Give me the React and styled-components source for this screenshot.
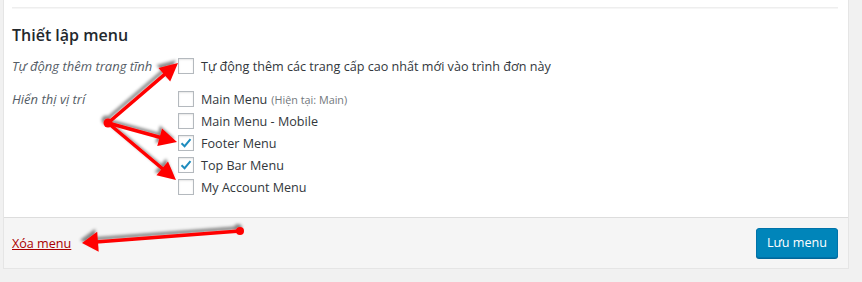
import React from "react";
import styled, { createGlobalStyle } from "styled-components";

const Global = createGlobalStyle`
  html, body { margin: 0; padding: 0; background: #f1f1f1; }
  body { font-family: "Open Sans", "Noto Sans", sans-serif; color: #32373c; font-size: 13px; }
`;

const Page = styled.div`
  position: relative;
  width: 862px;
  height: 282px;
  overflow: hidden;
`;

const Panel = styled.div`
  margin-left: 3px;
  width: 846px;
  box-sizing: border-box;
  background: #fff;
  border: 1px solid #e5e5e5;
  border-top: none;
`;

const Body = styled.div`
  padding: 7px 10px 22px 8px;
`;

const Divider = styled.div`
  border-top: 1px solid #eee;
  box-shadow: 0 1px 0 #f6f6f6;
`;

const Heading = styled.h3`
  margin: 17px 0 13px;
  font-size: 16px;
  font-weight: 600;
  color: #23282d;
  line-height: 20px;
`;

const Row = styled.div`
  display: grid;
  grid-template-columns: 166px 1fr;
  margin-top: ${(p) => p.$gap || 0}px;
`;

const Label = styled.div`
  font-style: italic;
  color: #555d66;
  font-size: 13px;
  line-height: 16px;
`;

const List = styled.div`
  display: flex;
  flex-direction: column;
  gap: 6px;
`;

const Option = styled.label`
  display: flex;
  align-items: center;
  gap: 7px;
  height: 16px;
  font-size: 12.6px;
  color: #32373c;
  white-space: nowrap;
`;

const Box = styled.span`
  width: 16px;
  height: 16px;
  box-sizing: border-box;
  border: 1px solid #b4b9be;
  background: #fff;
  box-shadow: inset 0 1px 2px rgba(0, 0, 0, 0.1);
  display: flex;
  align-items: center;
  justify-content: center;
  flex: none;
`;

const Small = styled.span`
  font-size: 10.8px;
  color: #72777c;
  margin-left: 4px;
`;

const Footer = styled.div`
  display: flex;
  align-items: center;
  justify-content: space-between;
  background: #f5f5f5;
  border-top: 1px solid #dddddd;
  padding: 10px 10px 10px 8px;
`;

const DeleteLink = styled.a`
  color: #a00;
  text-decoration: underline;
  font-size: 12.6px;
  cursor: pointer;
`;

const SaveButton = styled.button`
  height: 30px;
  padding: 0 10px;
  background: #0085ba;
  border: 1px solid #0073aa;
  border-radius: 3px;
  box-shadow: 0 1px 0 #006799;
  color: #fff;
  font-family: inherit;
  font-size: 12.6px;
  line-height: 28px;
`;

const Overlay = styled.svg`
  position: absolute;
  left: 0;
  top: 0;
  pointer-events: none;
`;

const Check = () => (
  <svg width="14" height="14" viewBox="0 0 14 14">
    <path d="M2.5 7.2 L5.6 10.2 L11.5 3.2" fill="none" stroke="#1e8cbe" strokeWidth="2" />
  </svg>
);

const Opt = ({ checked, children }) => (
  <Option>
    <Box>{checked && <Check />}</Box>
    <span>{children}</span>
  </Option>
);

const Arrow = ({ x1, y1, x2, y2, head = 18, w = 9 }) => {
  const dx = x2 - x1;
  const dy = y2 - y1;
  const len = Math.hypot(dx, dy);
  const ux = dx / len;
  const uy = dy / len;
  const bx = x2 - ux * head;
  const by = y2 - uy * head;
  const px = -uy * w;
  const py = ux * w;
  return (
    <g>
      <line x1={x1} y1={y1} x2={bx + ux * 2} y2={by + uy * 2} stroke="#f00" strokeWidth="3.5" strokeLinecap="round" />
      <polygon points={`${x2},${y2} ${bx + px},${by + py} ${bx - px},${by - py}`} fill="#f00" />
    </g>
  );
};

export default function App() {
  return (
    <Page>
      <Global />
      <Panel>
        <Body>
          <Divider />
          <Heading>Thiết lập menu</Heading>
          <Row>
            <Label>Tự động thêm trang tĩnh</Label>
            <List>
              <Opt>Tự động thêm các trang cấp cao nhất mới vào trình đơn này</Opt>
            </List>
          </Row>
          <Row $gap={17}>
            <Label>Hiển thị vị trí</Label>
            <List>
              <Opt>
                Main Menu<Small>(Hiện tại: Main)</Small>
              </Opt>
              <Opt>Main Menu - Mobile</Opt>
              <Opt checked>Footer Menu</Opt>
              <Opt checked>Top Bar Menu</Opt>
              <Opt>My Account Menu</Opt>
            </List>
          </Row>
        </Body>
        <Footer>
          <DeleteLink>Xóa menu</DeleteLink>
          <SaveButton>Lưu menu</SaveButton>
        </Footer>
      </Panel>
      <Overlay width="862" height="282">
        <defs>
          <filter id="sh" x="-20%" y="-20%" width="140%" height="140%">
            <feDropShadow dx="-2" dy="-3" stdDeviation="1.8" floodColor="#000" floodOpacity="0.45" />
          </filter>
        </defs>
        <g filter="url(#sh)">
          <Arrow x1={108} y1={123} x2={178} y2={63} />
          <Arrow x1={108} y1={123} x2={177} y2={142} />
          <Arrow x1={108} y1={123} x2={176} y2={180} />
          <Arrow x1={240} y1={231} x2={82} y2={243} head={16} w={10} />
          <circle cx="108" cy="123" r="4.5" fill="#f00" />
          <circle cx="240" cy="231" r="4" fill="#f00" />
        </g>
      </Overlay>
    </Page>
  );
}
